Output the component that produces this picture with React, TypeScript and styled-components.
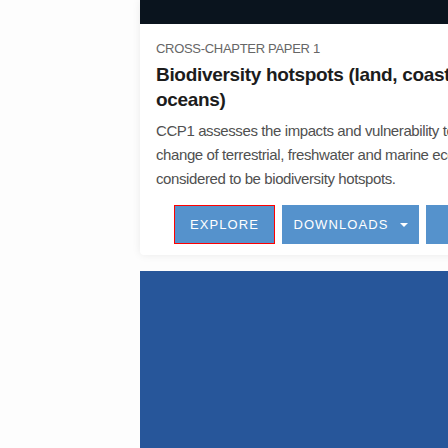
import React from "react";
import styled, { createGlobalStyle } from "styled-components";

const Global = createGlobalStyle`
  html, body { margin: 0; padding: 0; background: #fdfdfd; overflow: hidden; }
  body { font-family: "Liberation Sans", Arial, sans-serif; }
`;

const Page = styled.div`
  width: 448px;
  height: 448px;
  overflow: hidden;
  padding-left: 140px;
  box-sizing: border-box;
  display: flex;
  flex-direction: column;
  gap: 16px;
`;

const Card = styled.article`
  width: 420px;
  flex-shrink: 0;
  background: #ffffff;
  border-radius: 0 0 4px 4px;
  box-shadow: 0 0 8px rgba(0, 0, 0, 0.08);
  overflow: hidden;
`;

const Banner = styled.div`
  height: 24px;
  background: #0a141e;
`;

const Body = styled.div`
  padding: 17px 16px 11px 16px;
`;

const Kicker = styled.div`
  font-size: 13px;
  line-height: 16px;
  color: #666666;
  letter-spacing: -0.3px;
  white-space: nowrap;
`;

const Title = styled.h2`
  margin: 5px 0 0 0;
  font-size: 19px;
  line-height: 25px;
  font-weight: 700;
  color: #1c1c1c;
  letter-spacing: -0.32px;
  white-space: nowrap;
`;

const Text = styled.p`
  margin: 7px 0 0 0;
  font-size: 15px;
  line-height: 24px;
  color: #505050;
  letter-spacing: -0.4px;
  white-space: nowrap;
`;

const Actions = styled.div`
  display: flex;
  gap: 7px;
  margin-top: 14px;
  padding-left: 18px;
`;

const Button = styled.button<{ $focused?: boolean; $w: number }>`
  width: ${(p) => p.$w}px;
  height: 39px;
  flex-shrink: 0;
  box-sizing: border-box;
  border: 1px solid ${(p) => (p.$focused ? "#ff0000" : "#5592cc")};
  background: #5592cc;
  color: #ffffff;
  font-family: "Liberation Sans", Arial, sans-serif;
  font-size: 13px;
  letter-spacing: 1.1px;
  text-transform: uppercase;
  display: flex;
  align-items: center;
  justify-content: center;
  padding: 0;
  gap: 11px;
  cursor: pointer;
`;

const Caret = styled.span`
  width: 0;
  height: 0;
  border-left: 4px solid transparent;
  border-right: 4px solid transparent;
  border-top: 4px solid #ffffff;
`;

const Section = styled.section`
  width: 420px;
  flex: 1;
  background: #27569a;
`;

export default function App() {
  return (
    <>
      <Global />
      <Page>
        <Card>
          <Banner />
          <Body>
            <Kicker>CROSS-CHAPTER PAPER 1</Kicker>
            <Title>
              Biodiversity hotspots (land, coasts and
              <br />
              oceans)
            </Title>
            <Text>
              CCP1 assesses the impacts and vulnerability to climate
              <br />
              change of terrestrial, freshwater and marine ecosystems
              <br />
              considered to be biodiversity hotspots.
            </Text>
            <Actions>
              <Button $focused $w={101}>Explore</Button>
              <Button $w={137}>
                Downloads
                <Caret />
              </Button>
              <Button $w={120}>FAQs</Button>
            </Actions>
          </Body>
        </Card>
        <Section />
      </Page>
    </>
  );
}
